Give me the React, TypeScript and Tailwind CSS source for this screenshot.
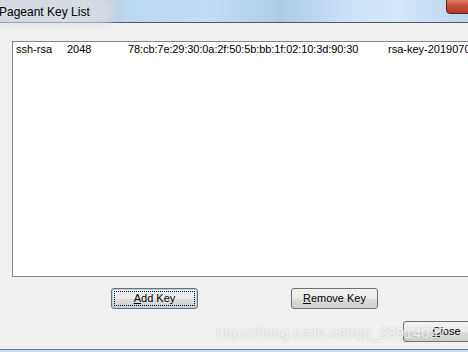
import React from "react";

const btn =
  "h-[21px] w-[87px] rounded-[3px] border border-[#707070] bg-[linear-gradient(180deg,#f2f2f2_0%,#ebebeb_50%,#dddddd_51%,#cfcfcf_100%)] text-[11px] text-black flex items-center justify-center shrink-0";

export default function App() {
  return (
    <div
      className="relative w-[468px] h-[352px] overflow-hidden flex flex-col bg-[#f0f0f0]"
      style={{ fontFamily: '"Liberation Sans", Arial, sans-serif' }}
    >
      {/* title bar */}
      <div className="relative h-[22px] shrink-0 bg-[linear-gradient(90deg,#c6d0da_0%,#cdd6df_18%,#b9c7d6_23%,#bcd7f1_27%,#c3dcf4_45%,#aecbe8_60%,#cde2f7_75%,#d4e6f8_85%,#bcd5ef_100%)] flex items-center">
        <div className="absolute left-[-10px] top-[-4px] w-[125px] h-[28px] rounded-[10px] bg-[#d7dde4] blur-[4px] opacity-90" />
        <span className="relative ml-[-1px] text-[12px] text-black leading-none mt-[1px]">Pageant Key List</span>
        <div className="absolute right-[-6px] top-[-2px] w-[28px] h-[16px] rounded-b-[4px] border border-[#5f2418] bg-[linear-gradient(180deg,#e08a78_0%,#c9523c_45%,#b33a24_100%)]" />
      </div>
      <div className="h-px shrink-0 bg-[#505a66]" />

      {/* body */}
      <div className="flex-1 flex flex-col">
        <div className="mt-[18px] ml-[12px] w-[470px] h-[236px] shrink-0 border border-[#828790] bg-white pt-[1px]">
          <div className="flex text-[11px] leading-[13px] text-black whitespace-nowrap">
            <span className="ml-[3px] w-[51px]">ssh-rsa</span>
            <span className="w-[61px]">2048</span>
            <span className="w-[260px] tracking-[-0.1px]">78:cb:7e:29:30:0a:2f:50:5b:bb:1f:02:10:3d:90:30</span>
            <span>rsa-key-20190701</span>
          </div>
        </div>

        <div className="mt-[11px] flex pl-[111px] gap-[93px]">
          <div className={btn + " border-[#3c7fb1] shadow-[inset_0_0_0_1px_#a6d4f2]"}>
            <div className="w-[81px] h-[15px] border border-dotted border-black flex items-center justify-center">
              <span><span className="underline">A</span>dd Key</span>
            </div>
          </div>
          <div className={btn}>
            <span><span className="underline">R</span>emove Key</span>
          </div>
        </div>

        <div className="mt-[12px] flex pl-[403px]">
          <div className={btn + " w-[70px]"}>
            <span><span className="underline">C</span>lose</span>
          </div>
        </div>
      </div>

      {/* bottom frame */}
      <div className="h-px shrink-0 bg-[#6a7a8c]" />
      <div className="h-[2px] shrink-0 bg-[#c5dcf3]" />

      {/* watermark */}
      <div className="absolute left-[216px] top-[324px] text-[15px] leading-[18px] text-white/80 whitespace-nowrap pointer-events-none [text-shadow:0_0_2px_rgba(0,0,0,0.25)]">
        https://blog.csdn.net/qq_29914037
      </div>
    </div>
  );
}
